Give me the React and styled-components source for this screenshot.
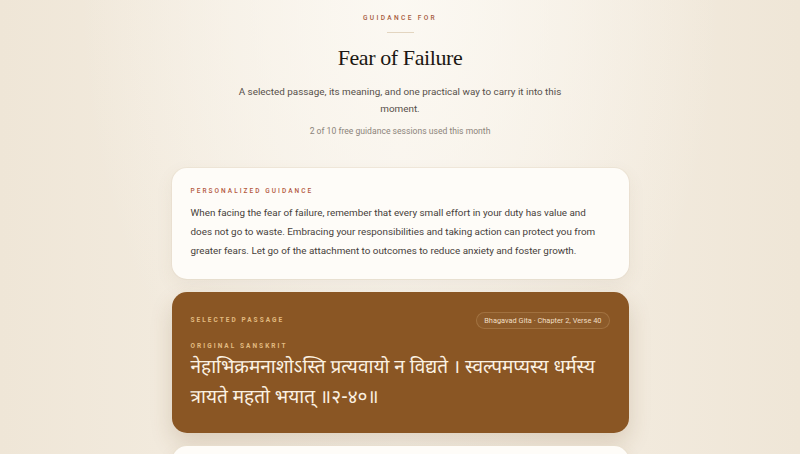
import React from 'react';
import styled, { createGlobalStyle } from 'styled-components';

const Global = createGlobalStyle`
  html, body {
    margin: 0;
    padding: 0;
  }
  body {
    background: #f1e9dc;
    font-family: Roboto, "Noto Sans", sans-serif;
    -webkit-font-smoothing: antialiased;
  }
`;

const Page = styled.div`
  height: 454px;
  box-sizing: border-box;
  overflow: hidden;
  background:
    radial-gradient(ellipse 320px 500px at 50% 0%, rgba(252, 249, 243, 0.95), rgba(252, 249, 243, 0) 100%),
    linear-gradient(90deg, #efe6d7 0%, #f6f0e6 50%, #efe6d7 100%);
  display: flex;
  flex-direction: column;
  align-items: center;
  padding-top: 14px;
`;

const Header = styled.header`
  display: flex;
  flex-direction: column;
  align-items: center;
  text-align: center;
`;

const Eyebrow = styled.div`
  font-size: 6.6px;
  font-weight: 500;
  letter-spacing: 2.35px;
  color: #a65a3c;
  text-transform: uppercase;
  line-height: 9px;
`;

const Rule = styled.div`
  width: 27px;
  height: 1px;
  background: #e3d5c0;
  margin: 9px 0 10px;
`;

const Title = styled.h1`
  margin: 0;
  font-family: "Liberation Serif", "DejaVu Serif", serif;
  font-weight: 400;
  font-size: 22px;
  letter-spacing: -0.4px;
  line-height: 30px;
  color: #1c1713;
`;

const Lead = styled.p`
  margin: 10px 0 0;
  width: 340px;
  font-size: 9.9px;
  line-height: 17px;
  color: #57504a;
`;

const Usage = styled.p`
  margin: 8px 0 0;
  font-size: 8.6px;
  line-height: 12px;
  color: #8c847b;
`;

const Stack = styled.main`
  margin-top: 31px;
  width: 457px;
  display: flex;
  flex-direction: column;
  gap: 13px;
`;

const Card = styled.section`
  border-radius: 15px;
  padding: ${p => (p.$dark ? '20px 19px 19px' : '19px 19px 19px')};
  background: ${p => (p.$dark ? '#8a5624' : '#fefcf8')};
  box-shadow: ${p =>
    p.$dark
      ? '0 10px 22px rgba(110, 70, 30, 0.18)'
      : '0 6px 18px rgba(120, 90, 50, 0.08), 0 0 0 1px rgba(235, 225, 210, 0.6)'};
  min-height: ${p => (p.$stub ? '40px' : 'auto')};
`;

const Label = styled.div`
  font-size: 6.5px;
  font-weight: ${p => (p.$dark ? 700 : 500)};
  letter-spacing: 2.05px;
  line-height: 9px;
  text-transform: uppercase;
  color: ${p => (p.$dark ? '#e2bb80' : '#b3583e')};
`;

const Body = styled.p`
  margin: 7px 0 0;
  font-size: 9.85px;
  line-height: 19px;
  color: #46403a;
`;

const CardTop = styled.div`
  display: flex;
  align-items: center;
  justify-content: space-between;
`;

const Pill = styled.span`
  font-size: 7.4px;
  line-height: 9px;
  color: #f1dfc4;
  padding: 3px 7px;
  border-radius: 10px;
  border: 1px solid rgba(240, 205, 150, 0.2);
  background: rgba(255, 255, 255, 0.03);
`;

const SubLabel = styled(Label)`
  margin-top: 13px;
`;

const Sanskrit = styled.p`
  margin: 3px 0 0;
  font-family: "Noto Sans Devanagari", "Noto Serif Devanagari", "Lohit Devanagari", "Noto Sans", sans-serif;
  font-size: 19px;
  line-height: 30px;
  color: #fbf1e2;
`;

export default function App() {
  return (
    <>
      <Global />
      <Page>
        <Header>
          <Eyebrow>Guidance for</Eyebrow>
          <Rule />
          <Title>Fear of Failure</Title>
          <Lead>
            A selected passage, its meaning, and one practical way to carry it into this moment.
          </Lead>
          <Usage>2 of 10 free guidance sessions used this month</Usage>
        </Header>
        <Stack>
          <Card>
            <Label>Personalized guidance</Label>
            <Body>
              When facing the fear of failure, remember that every small effort in your duty has value and
              does not go to waste. Embracing your responsibilities and taking action can protect you from
              greater fears. Let go of the attachment to outcomes to reduce anxiety and foster growth.
            </Body>
          </Card>
          <Card $dark>
            <CardTop>
              <Label $dark>Selected passage</Label>
              <Pill>Bhagavad Gita · Chapter 2, Verse 40</Pill>
            </CardTop>
            <SubLabel $dark>Original Sanskrit</SubLabel>
            <Sanskrit>
              नेहाभिक्रमनाशोऽस्ति प्रत्यवायो न विद्यते । स्वल्पमप्यस्य धर्मस्य त्रायते महतो भयात् ॥२-४०॥
            </Sanskrit>
          </Card>
          <Card $stub />
        </Stack>
      </Page>
    </>
  );
}
